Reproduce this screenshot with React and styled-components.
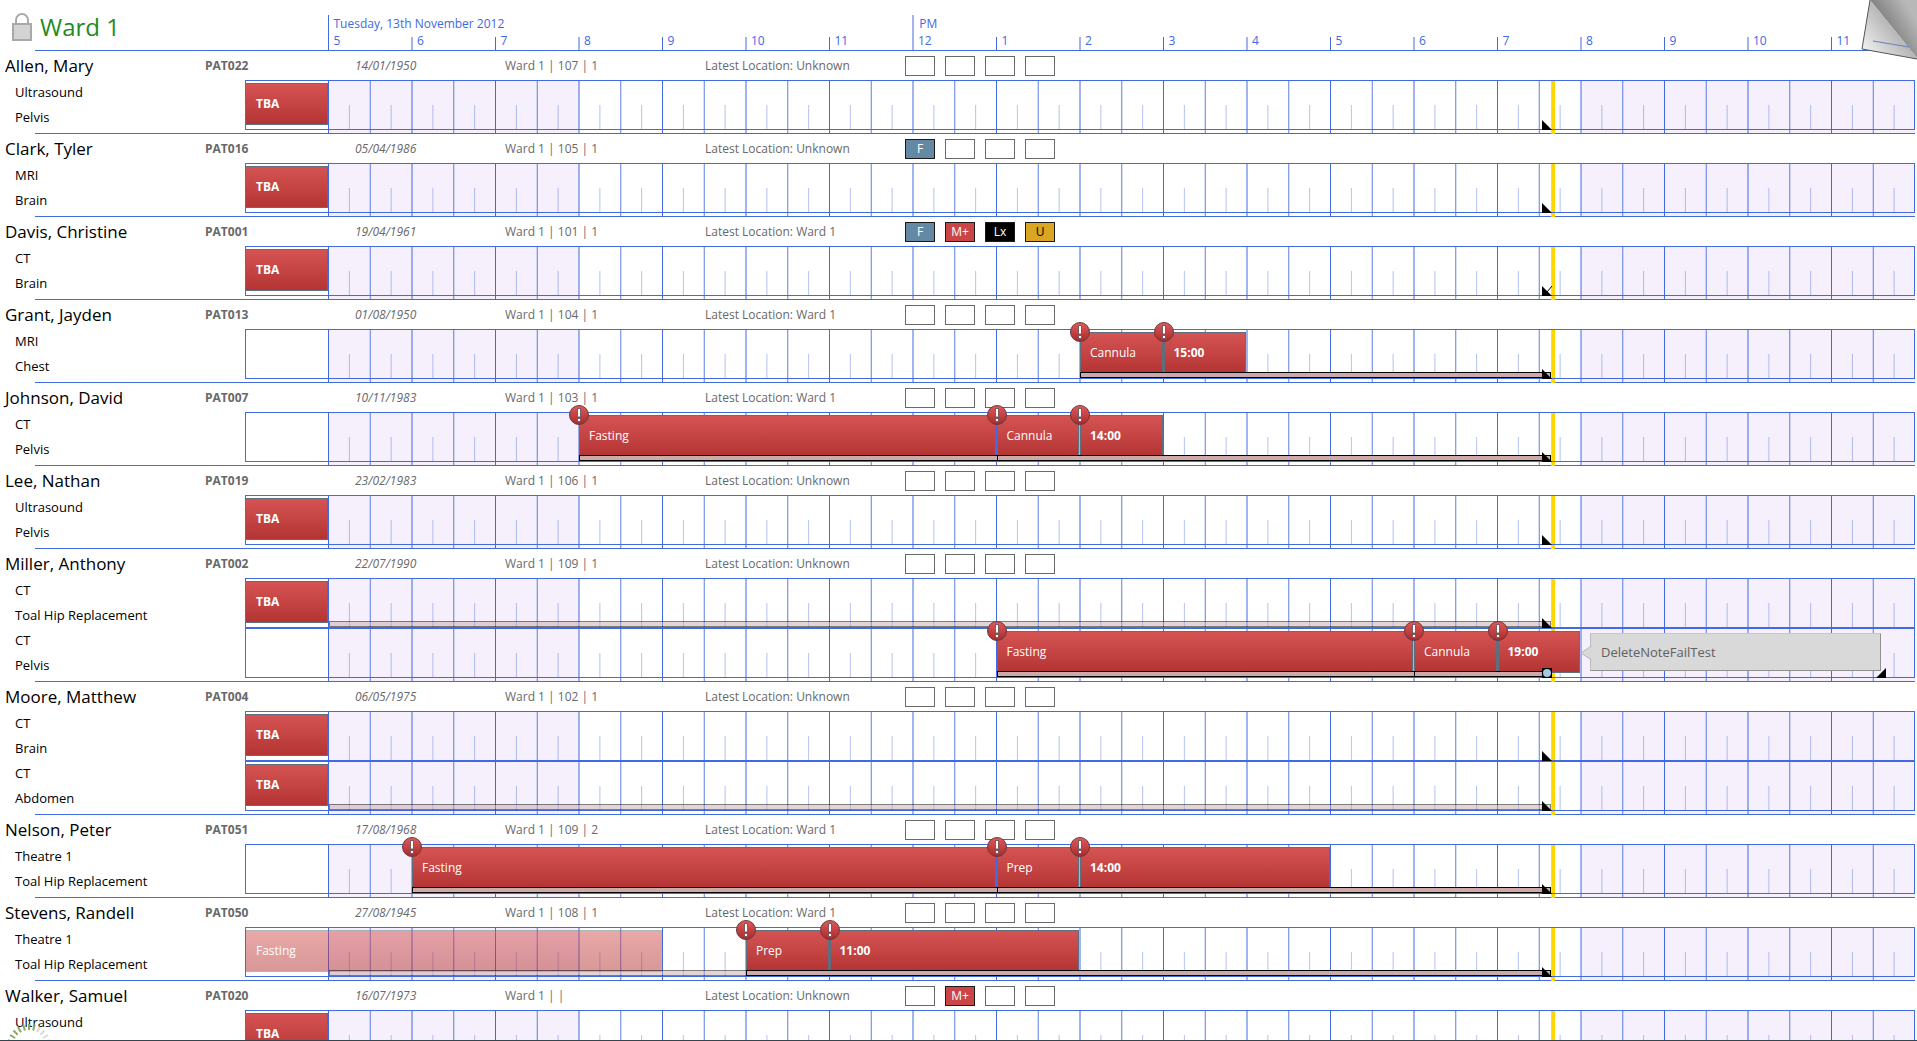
import React from "react";
import styled, { createGlobalStyle, css } from "styled-components";

const BLUE = "#4169e1";
const FIRST_HOUR = 4;
const HOURS = 20;
const NOW = 19 + 2 / 3;
const pct = (hour) => ((hour - FIRST_HOUR) / HOURS) * 100;

const GlobalStyle = createGlobalStyle`
  *, *::before, *::after { box-sizing: border-box; }
  html, body { height: 100%; }
  body {
    margin: 0;
    background: #fff;
    color: #000;
    font-family: "Open Sans", "Noto Sans", sans-serif;
    font-size: 12px;
    overflow: hidden;
  }
  h1, h2, ul, ol { margin: 0; padding: 0; font-weight: 400; list-style: none; }
`;

const Board = styled.main`
  height: 100vh;
  padding-right: 2px;
  overflow: hidden;
`;

const SideColumns = css`
  display: grid;
  grid-template-columns: 245px minmax(0, 1fr);
`;

const Header = styled.header`
  ${SideColumns}
  height: 50px;
`;

const Title = styled.div`
  display: flex;
  align-items: center;
  gap: 8px;
  padding: 4px 0 0 12px;
`;

const WardName = styled.h1`
  color: #228b22;
  font-size: 24px;
  line-height: 40px;
`;

const LockButton = styled.button`
  display: flex;
  padding: 0;
  border: 0;
  background: none;
`;

const Scale = styled.div`
  position: relative;
  color: ${BLUE};
`;

const Chart = styled.svg`
  position: absolute;
  inset: 0;
  width: 100%;
  height: 100%;
  overflow: visible;
`;

const Days = styled.div`
  display: flex;
  padding: 15px 0 0 5%;
  line-height: 18px;
`;

const DayPart = styled.div`
  flex: ${(p) => p.$span};
  padding-left: 5px;
  white-space: nowrap;
`;

const HourRow = styled.ol`
  display: grid;
  grid-template-columns: repeat(19, minmax(0, 1fr));
  padding-left: 5%;
  line-height: 16px;
`;

const HourLabel = styled.li`
  padding-left: 5px;
`;

const Rule = styled.hr`
  height: 1px;
  margin: 0 0 0 35px;
  border: 0;
  background: ${BLUE};
`;

const PatientHead = styled.div`
  display: grid;
  grid-template-columns: 200px 150px 150px 200px 200px auto;
  align-items: center;
  height: 29px;
  padding-left: 5px;
  color: #696969;
  white-space: nowrap;
`;

const Name = styled.h2`
  color: #000;
  font-size: 17px;
`;

const Code = styled.strong`
  font-weight: 700;
`;

const Birth = styled.em`
  font-style: italic;
`;

const Flags = styled.ul`
  display: flex;
  gap: 10px;
`;

const tones = {
  F: ["#6389a4", "#fff"],
  "M+": ["#c94546", "#fff"],
  Lx: ["#000", "#fff"],
  U: ["#daa520", "#000"],
};

const Flag = styled.li`
  width: 30px;
  height: 20px;
  border: 1px solid ${(p) => (p.$tone ? "#1a1a1a" : "#696969")};
  background: ${(p) => (p.$tone ? tones[p.$tone][0] : "#fff")};
  color: ${(p) => (p.$tone ? tones[p.$tone][1] : "#000")};
  line-height: 18px;
  text-align: center;
`;

const PatientBody = styled.div`
  ${SideColumns}
`;

const Labels = styled.ul`
  padding-left: 15px;
  font-size: 13px;
  line-height: 25px;
`;

const Tracks = styled.div`
  position: relative;
  padding-bottom: 3px;
`;

const Track = styled.div`
  position: relative;
  height: 50px;
`;

const TrackFrame = styled.div`
  position: absolute;
  inset: 0;
  border: 1px solid ${BLUE};
`;

const Bar = styled.div`
  position: absolute;
  top: 3px;
  left: ${(p) => pct(p.$from)}%;
  width: calc(${(p) => pct(p.$to) - pct(p.$from)}% - 1px);
  height: 42px;
  padding-left: ${(p) => (p.$from === FIRST_HOUR ? 10 : 9)}px;
  border: 1px solid #5d6f80;
  background: linear-gradient(#d55353, #b43434);
  color: #fff;
  font-weight: ${(p) => (p.$bold ? 700 : 400)};
  line-height: 40px;
  opacity: ${(p) => (p.$faded ? 0.5 : 1)};
`;

const Strip = styled.div`
  position: absolute;
  top: 43px;
  left: ${(p) => pct(p.$from)}%;
  width: ${(p) => pct(p.$to) - pct(p.$from)}%;
  height: 6px;
  border: 1px solid #000;
  border-right-width: ${(p) => (p.$joined ? 0 : 1)}px;
  background: #cdaaaa;
  opacity: ${(p) => (p.$faded ? 0.5 : 1)};
`;

const Marker = styled.svg`
  position: absolute;
  width: 10px;
  height: 10px;
  top: 40px;
  left: calc(${(p) => pct(p.$at)}% - 11px);
  overflow: visible;
`;

const Alert = styled.svg`
  position: absolute;
  width: 20px;
  height: 20px;
  top: -7px;
  left: calc(${(p) => pct(p.$at)}% - 10px);
`;

const NoteSlot = styled.div`
  position: absolute;
  top: 5px;
  left: calc(${(p) => pct(p.$from)}% - 1px);
  right: 34px;
  height: 38px;
  padding-left: 10px;
`;

const NoteTail = styled.svg`
  position: absolute;
  left: 0;
  top: 12px;
  width: 12px;
  height: 16px;
`;

const NoteBox = styled.div`
  height: 38px;
  padding-left: 10px;
  border: 1px solid;
  border-color: #c8c8c8 #909090 #909090 #bcbcbc;
  background: #d9d9d9;
  color: #606060;
  font-size: 13px;
  line-height: 36px;
`;

const PagePeel = styled.svg`
  position: fixed;
  top: 0;
  right: 0;
  width: 56px;
  height: 60px;
`;

const Spinner = styled.svg`
  position: fixed;
  left: 0;
  bottom: 0;
  width: 60px;
  height: 20px;
`;

const BottomEdge = styled.div`
  position: fixed;
  left: 0;
  right: 0;
  bottom: 0;
  height: 1px;
  background: #33454f;
`;

const tba = { from: 4, to: 5, text: "TBA", bold: true };
const patients = [
  { name: "Allen, Mary", code: "PAT022", born: "14/01/1950", bed: "Ward 1 | 107 | 1", loc: "Unknown",
    tracks: [{ labels: ["Ultrasound", "Pelvis"], bars: [tba] }] },
  { name: "Clark, Tyler", code: "PAT016", born: "05/04/1986", bed: "Ward 1 | 105 | 1", loc: "Unknown", flags: ["F"],
    tracks: [{ labels: ["MRI", "Brain"], bars: [tba] }] },
  { name: "Davis, Christine", code: "PAT001", born: "19/04/1961", bed: "Ward 1 | 101 | 1", loc: "Ward 1", flags: ["F", "M+", "Lx", "U"],
    tracks: [{ labels: ["CT", "Brain"], bars: [tba], crossed: true }] },
  { name: "Grant, Jayden", code: "PAT013", born: "01/08/1950", bed: "Ward 1 | 104 | 1", loc: "Ward 1",
    tracks: [{ labels: ["MRI", "Chest"], strips: [{ from: 14 }], bars: [
      { from: 14, to: 15, text: "Cannula", alert: true }, { from: 15, to: 16, text: "15:00", bold: true, alert: true }] }] },
  { name: "Johnson, David", code: "PAT007", born: "10/11/1983", bed: "Ward 1 | 103 | 1", loc: "Ward 1",
    tracks: [{ labels: ["CT", "Pelvis"], strips: [{ from: 8, to: 13 }, { from: 13 }], bars: [
      { from: 8, to: 13, text: "Fasting", alert: true }, { from: 13, to: 14, text: "Cannula", alert: true },
      { from: 14, to: 15, text: "14:00", bold: true, alert: true }] }] },
  { name: "Lee, Nathan", code: "PAT019", born: "23/02/1983", bed: "Ward 1 | 106 | 1", loc: "Unknown",
    tracks: [{ labels: ["Ultrasound", "Pelvis"], bars: [tba] }] },
  { name: "Miller, Anthony", code: "PAT002", born: "22/07/1990", bed: "Ward 1 | 109 | 1", loc: "Unknown",
    tracks: [
      { labels: ["CT", "Toal Hip Replacement"], strips: [{ from: 5, faded: true }], bars: [tba] },
      { labels: ["CT", "Pelvis"], strips: [{ from: 13, to: 18 }, { from: 18 }], note: "DeleteNoteFailTest", bars: [
        { from: 13, to: 18, text: "Fasting", alert: true }, { from: 18, to: 19, text: "Cannula", alert: true },
        { from: 19, to: 20, text: "19:00", bold: true, alert: true }] }] },
  { name: "Moore, Matthew", code: "PAT004", born: "06/05/1975", bed: "Ward 1 | 102 | 1", loc: "Unknown",
    tracks: [
      { labels: ["CT", "Brain"], bars: [tba] },
      { labels: ["CT", "Abdomen"], strips: [{ from: 5, faded: true }], bars: [tba] }] },
  { name: "Nelson, Peter", code: "PAT051", born: "17/08/1968", bed: "Ward 1 | 109 | 2", loc: "Ward 1",
    tracks: [{ labels: ["Theatre 1", "Toal Hip Replacement"], strips: [{ from: 6, to: 13 }, { from: 13 }], bars: [
      { from: 6, to: 13, text: "Fasting", alert: true }, { from: 13, to: 14, text: "Prep", alert: true },
      { from: 14, to: 17, text: "14:00", bold: true, alert: true }] }] },
  { name: "Stevens, Randell", code: "PAT050", born: "27/08/1945", bed: "Ward 1 | 108 | 1", loc: "Ward 1",
    tracks: [{ labels: ["Theatre 1", "Toal Hip Replacement"], strips: [{ from: 5, to: 10, faded: true }, { from: 10 }], bars: [
      { from: 4, to: 9, text: "Fasting", faded: true }, { from: 10, to: 11, text: "Prep", alert: true },
      { from: 11, to: 14, text: "11:00", bold: true, alert: true }] }] },
  { name: "Walker, Samuel", code: "PAT020", born: "16/07/1973", bed: "Ward 1 | |", loc: "Unknown", flags: [null, "M+"],
    tracks: [{ labels: ["Ultrasound"], bars: [tba] }] },
];

const hourList = Array.from({ length: 19 }, (_, i) => i + 5);

function Grid() {
  return (
    <Chart aria-hidden="true">
      <rect x={`${pct(5)}%`} width="15%" height="100%" fill="#f5f0fb" />
      <rect x={`${pct(20)}%`} width="20%" height="100%" fill="#f5f0fb" />
      {hourList.map((h) => (
        <g key={h} stroke={BLUE} strokeWidth="1">
          <line x1={`${pct(h)}%`} x2={`${pct(h)}%`} y1="0" y2="100%" />
          <line x1={`${pct(h + 0.5)}%`} x2={`${pct(h + 0.5)}%`} y1="0" y2="100%" strokeOpacity="0.85" />
        </g>
      ))}
      <svg x={`${pct(NOW)}%`} overflow="visible">
        <rect x="-2" y="1" width="4" height="100%" fill="#ffd700" />
      </svg>
    </Chart>
  );
}

function Ticks() {
  return (
    <Chart aria-hidden="true">
      {hourList.flatMap((h) => [h + 0.25, h + 0.75]).map((h) => (
        <line key={h} x1={`${pct(h)}%`} x2={`${pct(h)}%`} y1="25" y2="49" stroke={BLUE} strokeOpacity="0.4" />
      ))}
    </Chart>
  );
}

function AlertIcon({ at }) {
  return (
    <Alert $at={at} viewBox="0 0 20 20" role="img" aria-label="Alert">
      <defs>
        <linearGradient id="alertFill" x1="0" y1="0" x2="0" y2="1">
          <stop offset="0" stopColor="#e05a5a" />
          <stop offset="1" stopColor="#a82a2a" />
        </linearGradient>
      </defs>
      <circle cx="10" cy="10" r="9.5" fill="url(#alertFill)" stroke="#6b3a40" />
      <path d="M8.5 3.5h3v8.5h-3z M8.5 13.5h3v3h-3z" fill="#fff" stroke="#5d4a50" strokeWidth="0.8" />
    </Alert>
  );
}

function TrackRow({ track }) {
  const { bars, strips = [], note, crossed } = track;
  return (
    <Track>
      <Ticks />
      <TrackFrame />
      {bars.map((b) => (
        <Bar key={b.from} $from={b.from} $to={b.to} $bold={b.bold} $faded={b.faded}>{b.text}</Bar>
      ))}
      {strips.map((s) => (
        <Strip key={s.from} $from={s.from} $to={s.to || NOW - 0.03} $joined={Boolean(s.to)} $faded={s.faded} />
      ))}
      {bars.filter((b) => b.alert).map((b) => <AlertIcon key={b.from} at={b.from} />)}
      {note && (
        <NoteSlot $from={20}>
          <NoteBox>{note}</NoteBox>
          <NoteTail aria-hidden="true">
            <path d="M11.5 1L1 8L11.5 15" fill="#d9d9d9" stroke="#b4b4b4" />
          </NoteTail>
        </NoteSlot>
      )}
      <Marker $at={NOW} aria-hidden="true">
        {note ? (
          <g>
            <rect width="10" height="10" fill="#000" />
            <circle cx="5" cy="5" r="4" fill="#a6c8e4" />
          </g>
        ) : (
          <path d="M0 0L10 10H0Z" />
        )}
        {crossed && <path d="M5 6L10 0" fill="none" stroke="#000" />}
      </Marker>
      {note && (
        <Marker $at={23.66} aria-hidden="true">
          <path d="M10 0V10H0Z" />
        </Marker>
      )}
    </Track>
  );
}

function Patient({ patient }) {
  const flags = patient.flags || [];
  return (
    <section>
      <PatientHead>
        <Name>{patient.name}</Name>
        <Code>{patient.code}</Code>
        <Birth>{patient.born}</Birth>
        <span>{patient.bed}</span>
        <span>Latest Location: {patient.loc}</span>
        <Flags>
          {[0, 1, 2, 3].map((i) => <Flag key={i} $tone={flags[i]}>{flags[i]}</Flag>)}
        </Flags>
      </PatientHead>
      <PatientBody>
        <Labels>
          {patient.tracks.flatMap((t) => t.labels).map((l, i) => <li key={i}>{l}</li>)}
        </Labels>
        <Tracks>
          <Grid />
          {patient.tracks.map((t, i) => <TrackRow key={i} track={t} />)}
        </Tracks>
      </PatientBody>
      <Rule />
    </section>
  );
}

export default function App() {
  return (
    <>
      <GlobalStyle />
      <Board>
        <Header>
          <Title>
            <LockButton type="button" aria-label="Lock">
              <svg width="20" height="30" viewBox="0 0 20 30">
                <path d="M4 13V8a6 6 0 0 1 12 0v5" fill="none" stroke="#a9a9a9" strokeWidth="2" />
                <rect x="1" y="12" width="18" height="16" fill="#d3d3d3" stroke="#a9a9a9" strokeWidth="2" />
              </svg>
            </LockButton>
            <WardName>Ward 1</WardName>
          </Title>
          <Scale>
            <Chart aria-hidden="true">
              {hourList.map((h) => (
                <line key={h} x1={`${pct(h)}%`} x2={`${pct(h)}%`} y1={h === 5 || h === 12 ? 15 : 37} y2="50" stroke={BLUE} />
              ))}
            </Chart>
            <Days>
              <DayPart $span={7}>Tuesday, 13th November 2012</DayPart>
              <DayPart $span={12}>PM</DayPart>
            </Days>
            <HourRow>
              {hourList.map((h) => <HourLabel key={h}>{h > 12 ? h - 12 : h}</HourLabel>)}
            </HourRow>
          </Scale>
        </Header>
        <Rule />
        {patients.map((p) => <Patient key={p.code} patient={p} />)}
      </Board>
      <PagePeel viewBox="0 0 56 60" aria-hidden="true">
        <defs>
          <linearGradient id="peelLight" x1="0.1" y1="0.9" x2="0.7" y2="0.4">
            <stop offset="0" stopColor="#eee" />
            <stop offset="1" stopColor="#a8a8a8" />
          </linearGradient>
          <linearGradient id="peelDark" x1="0" y1="0.7" x2="0.8" y2="0.1">
            <stop offset="0.2" stopColor="#6e6e6e" />
            <stop offset="1" stopColor="#b8b8b8" />
          </linearGradient>
        </defs>
        <path d="M9 0H56V58Z" fill="url(#peelDark)" />
        <path d="M9 0L1 49L56 59V58Z" fill="url(#peelLight)" />
        <path d="M9 0L1 49L56 59" fill="none" stroke="#555" />
        <path d="M12 41L48 47" stroke="#6a7fc0" />
      </PagePeel>
      <Spinner aria-hidden="true">
        {Array.from({ length: 11 }, (_, i) => {
          const a = ((i - 5) * 15 * Math.PI) / 180;
          return (
            <line key={i} x1={29 + 16 * Math.sin(a)} y1={25 - 16 * Math.cos(a)} x2={29 + 22 * Math.sin(a)} y2={25 - 22 * Math.cos(a)}
              stroke={i < 7 ? "#8aa860" : "#d9ddd0"} strokeWidth="2" />
          );
        })}
      </Spinner>
      <BottomEdge />
    </>
  );
}
